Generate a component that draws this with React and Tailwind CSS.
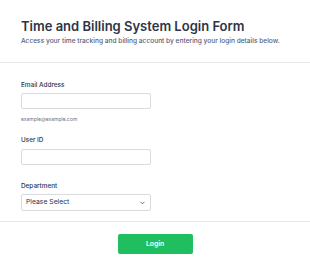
export default function App() {
  return (
    <div className="w-[310px] h-[270px] bg-white font-['Inter',sans-serif] overflow-hidden">
      <div className="px-[21px] pt-[18px] pb-[16px]">
        <h1 className="text-[13px] leading-[16px] font-semibold text-[#2d3446]">
          Time and Billing System Login Form
        </h1>
        <p className="mt-[3px] text-[6.6px] leading-[9px] font-medium text-[#56617b] whitespace-nowrap">
          Access your time tracking and billing account by entering your login details below.
        </p>
      </div>
      <div className="border-t border-[#e6e7eb]" />
      <div className="px-[21px] pt-[18px]">
        <label className="block text-[6.4px] leading-[8px] font-medium text-[#2d3446]">Email Address</label>
        <input className="mt-[4px] block w-[130px] h-[16px] border border-[#d9dbe0] rounded-[2px] outline-none" />
        <p className="mt-[7px] text-[5px] leading-[6px] text-[#6b7280]">example@example.com</p>
        <label className="mt-[14px] block text-[6.4px] leading-[8px] font-medium text-[#2d3446]">User ID</label>
        <input className="mt-[5px] block w-[130px] h-[16px] border border-[#d9dbe0] rounded-[2px] outline-none" />
        <label className="mt-[17px] block text-[6.4px] leading-[8px] font-medium text-[#2d3446]">Department</label>
        <div className="mt-[4px] w-[130px] h-[17px] border border-[#d9dbe0] rounded-[2px] flex items-center justify-between pl-[4px] pr-[5px]">
          <span className="text-[6.8px] text-[#2d3446]">Please Select</span>
          <svg width="5" height="4" viewBox="0 0 6 4" fill="none">
            <path d="M1 1l2 2 2-2" stroke="#4b5563" strokeWidth="1" strokeLinecap="round" strokeLinejoin="round" />
          </svg>
        </div>
      </div>
      <div className="mt-[10px] border-t border-[#e6e7eb]" />
      <div className="flex justify-center pt-[12px]">
        <button className="w-[75px] h-[20px] rounded-[2px] bg-[#1fbe5e] text-white text-[6.8px] font-semibold">
          Login
        </button>
      </div>
    </div>
  );
}
